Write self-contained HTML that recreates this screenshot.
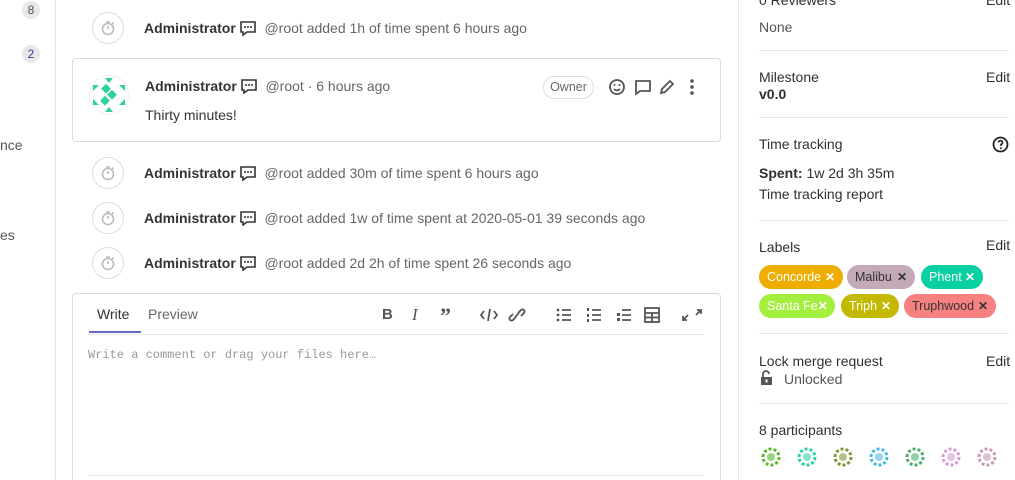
<!DOCTYPE html>
<html><head><style>
*{margin:0;padding:0;box-sizing:border-box}
html,body{width:1015px;height:480px;overflow:hidden}
body{background:#fff;font-family:"Liberation Sans",sans-serif;font-size:14px;color:#303030;position:relative}
.abs{position:absolute}
.lsb{left:0;top:0;width:56px;height:480px;border-right:1px solid #e5e5e5}
.badge{background:#e8e8e8;border-radius:9px;font-size:12px;width:18px;height:18px;text-align:center;line-height:18px;color:#555}
.ic{width:32px;height:32px;border:1px solid #ddd;border-radius:50%;background:#fff}
.line{font-size:14px;color:#666;white-space:nowrap}
.line b{color:#333}
.card{border:1px solid #dcdcdc;border-radius:4px;background:#fff}
.rsb{left:738px;top:0;width:277px;height:480px;border-left:1px solid #e5e5e5}
.hr{height:1px;background:#e5e5e5;left:759px;width:250px}
.lab{border-radius:12px;height:24px;line-height:24px;font-size:12.5px;padding:0 8px;color:#fff;position:absolute;display:flex;justify-content:space-between;white-space:nowrap}
.lab span{font-weight:bold;font-size:12px}
.tb{color:#555;font-size:15px;font-weight:bold}
</style></head><body>
<div class="abs lsb"></div>
<div class="abs badge" style="left:22px;top:1px">8</div>
<div class="abs badge" style="left:22px;top:45px;color:#3a3a9a">2</div>
<div class="abs" style="left:0;top:137px;color:#555">nce</div>
<div class="abs" style="left:0;top:227px;color:#555">es</div>

<svg width="0" height="0" style="position:absolute"><defs>
<g id="clk"><circle cx="0" cy="1" r="5.5" fill="none" stroke="#bbb" stroke-width="1.6"/><path d="M0 1V-2M-2 -6h4M4 -4l1.5 -1.5" stroke="#bbb" stroke-width="1.6" fill="none"/></g>
<g id="cm"><path d="M1 2h14v10h-8l-4 3v-3H1z" fill="none" stroke="#333" stroke-width="1.6"/><circle cx="5" cy="7" r="1" fill="#333"/><circle cx="8" cy="7" r="1" fill="#333"/><circle cx="11" cy="7" r="1" fill="#333"/></g>
</defs></svg>

<div class="abs ic" style="left:92px;top:12px"><svg width="30" height="30"><use href="#clk" x="15" y="15"/></svg></div>
<div class="abs line" style="left:144px;top:20px"><b>Administrator</b> <svg width="17" height="16" style="vertical-align:-3px"><use href="#cm"/></svg> &nbsp;@root added 1h of time spent 6 hours ago</div>

<div class="abs card" style="left:72px;top:58px;width:649px;height:84px"></div>
<svg class="abs" style="left:89px;top:75px" width="40" height="40"><circle cx="20" cy="20" r="19.5" fill="#fff" stroke="#eee"/><g fill="#2fd39a"><rect x="14" y="10" width="7" height="7" transform="rotate(45 17 13)"/><rect x="20" y="16" width="7" height="7" transform="rotate(45 23 19)"/><rect x="13" y="22" width="7" height="7" transform="rotate(45 16 25)"/><path d="M4 10l6 0 -6 6zM36 10l-6 0 6 6zM4 30l6 0-6-6zM36 30l-6 0 6-6zM16 3l8 0-4 5zM16 37l8 0-4-5z"/></g></svg>
<div class="abs line" style="left:145px;top:78px"><b>Administrator</b> <svg width="17" height="16" style="vertical-align:-3px"><use href="#cm"/></svg> &nbsp;@root · 6 hours ago</div>
<div class="abs" style="left:145px;top:107px;color:#333">Thirty minutes!</div>
<div class="abs" style="left:543px;top:76px;width:51px;height:23px;border:1px solid #ddd;border-radius:12px;font-size:12.5px;color:#666;text-align:center;line-height:21px">Owner</div>
<svg class="abs" style="left:607px;top:77px" width="95" height="20"><g fill="none" stroke="#555" stroke-width="1.8"><circle cx="10" cy="10" r="7"/><path d="M7 12q3 3 6 0"/><path d="M29 4h14v10h-10l-4 3z"/><path d="M54 16l1-4 8-8 3 3-8 8z"/></g><g fill="#555"><circle cx="7.5" cy="8" r="1"/><circle cx="12.5" cy="8" r="1"/><circle cx="85" cy="4" r="1.8"/><circle cx="85" cy="10" r="1.8"/><circle cx="85" cy="16" r="1.8"/></g></svg>

<div class="abs ic" style="left:92px;top:157px"><svg width="30" height="30"><use href="#clk" x="15" y="15"/></svg></div>
<div class="abs line" style="left:144px;top:165px"><b>Administrator</b> <svg width="17" height="16" style="vertical-align:-3px"><use href="#cm"/></svg> &nbsp;@root added 30m of time spent 6 hours ago</div>
<div class="abs ic" style="left:92px;top:202px"><svg width="30" height="30"><use href="#clk" x="15" y="15"/></svg></div>
<div class="abs line" style="left:144px;top:210px"><b>Administrator</b> <svg width="17" height="16" style="vertical-align:-3px"><use href="#cm"/></svg> &nbsp;@root added 1w of time spent at 2020-05-01 39 seconds ago</div>
<div class="abs ic" style="left:92px;top:247px"><svg width="30" height="30"><use href="#clk" x="15" y="15"/></svg></div>
<div class="abs line" style="left:144px;top:255px"><b>Administrator</b> <svg width="17" height="16" style="vertical-align:-3px"><use href="#cm"/></svg> &nbsp;@root added 2d 2h of time spent 26 seconds ago</div>

<div class="abs card" style="left:72px;top:293px;width:649px;height:200px"></div>
<div class="abs" style="left:97px;top:306px;color:#333">Write</div>
<div class="abs" style="left:89px;top:331px;width:52px;height:2px;background:#6666c4"></div>
<div class="abs" style="left:148px;top:306px;color:#666">Preview</div>
<div class="abs" style="left:88px;top:334px;width:616px;height:1px;background:#e5e5e5"></div>
<div class="abs tb" style="left:382px;top:306px">B</div>
<div class="abs tb" style="left:412px;top:305px;font-style:italic;font-family:'Liberation Serif',serif;font-weight:normal;font-size:17px">I</div>
<div class="abs tb" style="left:440px;top:303px;font-size:22px;font-family:'Liberation Serif',serif">&#8221;</div>
<svg class="abs" style="left:480px;top:306px" width="225" height="18"><g fill="none" stroke="#555" stroke-width="1.8"><path d="M4 5l-3 4 3 4M14 5l3 4-3 4M10 3l-2 12"/><path d="M36 11l-3 3a2 2 0 0 1-3-3l3-3M38 7l3-3a2 2 0 0 1 3 3l-3 3M35 11l4-4"/><path d="M82 4h9M82 9h9M82 14h9M112 4h9M112 9h9M112 14h9M142 4h9M142 9h9M142 14h9"/><rect x="165" y="2" width="14" height="14"/><path d="M165 7h14M165 11.5h14M172 7v9"/><path d="M207 14l-4 0 0-4M217 4l4 0 0 4M203 14l5-5M221 4l-5 5"/></g><g fill="#555"><circle cx="78" cy="4" r="1.4"/><circle cx="78" cy="9" r="1.4"/><circle cx="78" cy="14" r="1.4"/><rect x="107" y="2" width="2" height="3"/><rect x="107" y="8" width="2" height="3"/><rect x="107" y="13" width="2" height="3"/><rect x="137" y="7" width="3" height="3"/><rect x="137" y="12" width="3" height="3"/></g></svg>
<div class="abs" style="left:88px;top:348px;font-family:'Liberation Mono',monospace;font-size:12px;color:#999">Write a comment or drag your files here…</div>
<div class="abs" style="left:88px;top:475px;width:616px;height:1px;background:#e5e5e5"></div>

<div class="abs rsb"></div>
<div class="abs" style="left:759px;top:-8px">0 Reviewers</div>
<div class="abs" style="left:986px;top:-8px">Edit</div>
<div class="abs" style="left:759px;top:19px;color:#555">None</div>
<div class="abs hr" style="top:50px"></div>
<div class="abs" style="left:759px;top:69px">Milestone</div>
<div class="abs" style="left:986px;top:69px">Edit</div>
<div class="abs" style="left:759px;top:86px;font-weight:bold">v0.0</div>
<div class="abs hr" style="top:117px"></div>
<div class="abs" style="left:759px;top:136px">Time tracking</div>
<svg class="abs" style="left:992px;top:136px" width="17" height="17"><circle cx="8.5" cy="8.5" r="7" fill="none" stroke="#222" stroke-width="1.8"/><path d="M6.5 6.5a2 2 0 1 1 2.5 2v1.5" fill="none" stroke="#222" stroke-width="1.6"/><circle cx="8.8" cy="12.3" r="1" fill="#222"/></svg>
<div class="abs" style="left:759px;top:165px"><b>Spent:</b> 1w 2d 3h 35m</div>
<div class="abs" style="left:759px;top:186px">Time tracking report</div>
<div class="abs hr" style="top:220px"></div>
<div class="abs" style="left:759px;top:239px">Labels</div>
<div class="abs" style="left:986px;top:237px">Edit</div>
<div class="lab" style="left:759px;top:265px;width:84px;background:#eead00">Concorde<span>✕</span></div>
<div class="lab" style="left:847px;top:265px;width:68px;background:#c4a9b8;color:#333">Malibu<span>✕</span></div>
<div class="lab" style="left:921px;top:265px;width:62px;background:#08d0a0">Phent<span>✕</span></div>
<div class="lab" style="left:759px;top:294px;width:76px;background:#a3ef3e">Santa Fe<span>✕</span></div>
<div class="lab" style="left:841px;top:294px;width:58px;background:#c2b900">Triph<span>✕</span></div>
<div class="lab" style="left:904px;top:294px;width:92px;background:#f78181;color:#333">Truphwood<span>✕</span></div>
<div class="abs hr" style="top:333px"></div>
<div class="abs" style="left:759px;top:353px">Lock merge request</div>
<div class="abs" style="left:986px;top:353px">Edit</div>
<svg class="abs" style="left:760px;top:370px" width="14" height="16"><path d="M3 7V4a3 3 0 0 1 6 0" fill="none" stroke="#555" stroke-width="1.8"/><rect x="1" y="7" width="11" height="8" fill="#555"/><rect x="5.5" y="9.5" width="2" height="3" fill="#fff"/></svg>
<div class="abs" style="left:784px;top:371px;color:#555">Unlocked</div>
<div class="abs hr" style="top:403px"></div>
<div class="abs" style="left:759px;top:422px">8 participants</div>
<svg class="abs" style="left:759px;top:445px" width="245" height="24"><g stroke-width="3" stroke-dasharray="3 2" fill="none"><circle cx="12" cy="12" r="8" stroke="#5cb82d"/><circle cx="48" cy="12" r="8" stroke="#2fd3a6"/><circle cx="84" cy="12" r="8" stroke="#7a9a3a"/><circle cx="120" cy="12" r="8" stroke="#4ab8e8"/><circle cx="156" cy="12" r="8" stroke="#4aaf6a"/><circle cx="192" cy="12" r="8" stroke="#d99ad9"/><circle cx="228" cy="12" r="8" stroke="#c898b8"/></g><g fill-opacity=".6"><circle cx="12" cy="12" r="4" fill="#5cb82d"/><circle cx="48" cy="12" r="4" fill="#2fd3a6"/><circle cx="84" cy="12" r="4" fill="#7a9a3a"/><circle cx="120" cy="12" r="4" fill="#4ab8e8"/><circle cx="156" cy="12" r="4" fill="#4aaf6a"/><circle cx="192" cy="12" r="4" fill="#d99ad9"/><circle cx="228" cy="12" r="4" fill="#c898b8"/></g></svg>
</body></html>
